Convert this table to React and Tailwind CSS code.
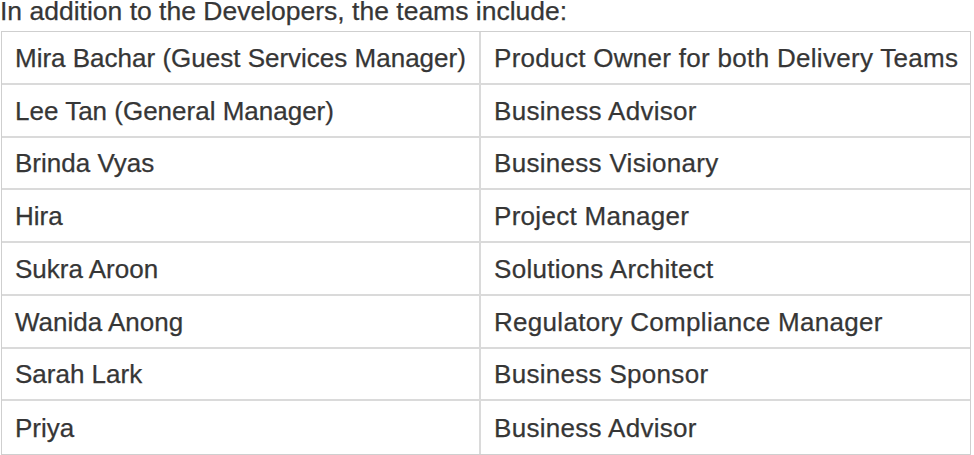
export default function App() {
  const rows = [
    ["Mira Bachar (Guest Services Manager)", "Product Owner for both Delivery Teams"],
    ["Lee Tan (General Manager)", "Business Advisor"],
    ["Brinda Vyas", "Business Visionary"],
    ["Hira", "Project Manager"],
    ["Sukra Aroon", "Solutions Architect"],
    ["Wanida Anong", "Regulatory Compliance Manager"],
    ["Sarah Lark", "Business Sponsor"],
    ["Priya", "Business Advisor"],
  ];
  return (
    <div
      className="w-[974px] h-[455px] overflow-hidden bg-white text-[#363636] [-webkit-text-stroke:0.25px_#363636]"
      style={{ fontFamily: '"Liberation Sans", Arial, sans-serif' }}
    >
      <div className="h-[31px] text-[26.5px] leading-[22px] whitespace-nowrap">
        In addition to the Developers, the teams include:
      </div>
      <div className="ml-[1px] w-[970px] grid grid-cols-[479px_1fr] border border-[#cfcfcf]">
        {rows.map(([a, b], i) => (
          <div key={i} className="contents">
            <div
              className={`h-[52.75px] flex items-center pt-[1px] pl-[13px] text-[26px] leading-[30px] whitespace-nowrap border-r-2 border-[#dadada] ${
                i < rows.length - 1 ? "border-b-2" : ""
              }`}
            >
              {a}
            </div>
            <div
              className={`h-[52.75px] flex items-center pt-[1px] pl-[13px] text-[26px] leading-[30px] tracking-[0.3px] whitespace-nowrap border-[#dadada] ${
                i < rows.length - 1 ? "border-b-2" : ""
              }`}
            >
              {b}
            </div>
          </div>
        ))}
      </div>
    </div>
  );
}
